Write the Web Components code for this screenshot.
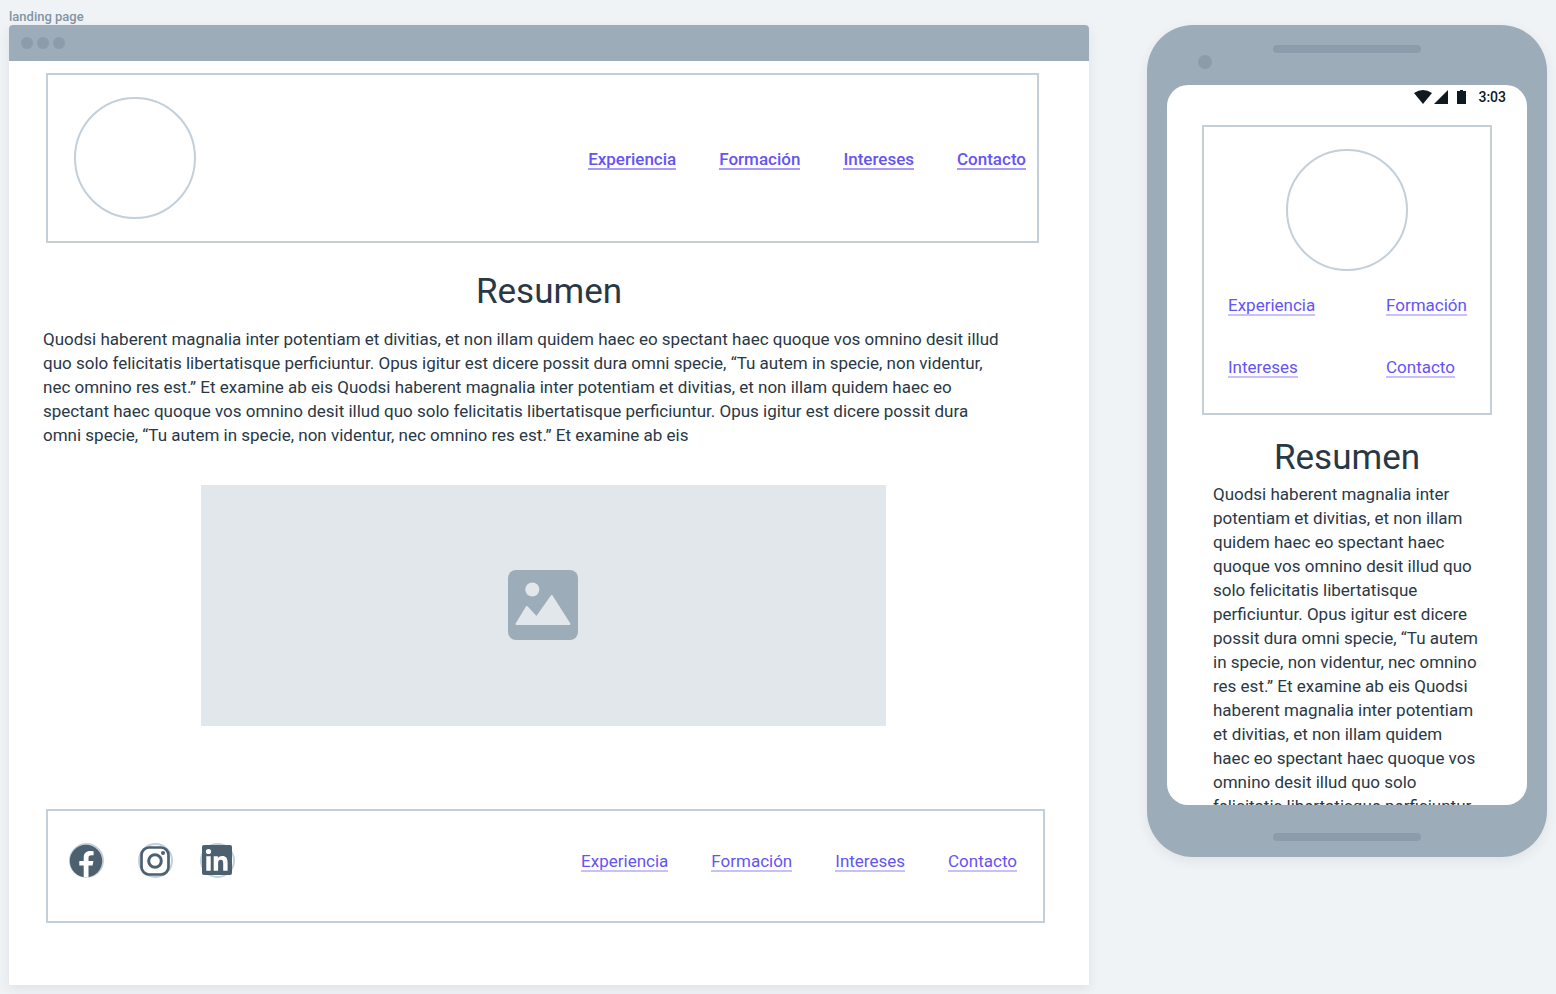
<!DOCTYPE html>
<html lang="es">
<head>
<meta charset="utf-8">
<meta name="viewport" content="width=device-width, initial-scale=1">
<title>landing page</title>
<style>
  :root {
    --frame: #9dacb9;
    --frame-detail: #8d9cab;
    --line: #c3cfd9;
    --ink: #293845;
    --link: #6554f4;
    --underline: #c7c0ff;
  }
  body {
    margin: 0;
    padding: 9px;
    background: #eff3f6;
    color: var(--ink);
    font: 17px/24px Roboto, "Liberation Sans", sans-serif;
  }
</style>
</head>
<body>
<wire-board>
  <span slot="label">landing page</span>
  <browser-frame>
    <site-header>
      <site-nav>
        <nav-link>Experiencia</nav-link>
        <nav-link>Formación</nav-link>
        <nav-link>Intereses</nav-link>
        <nav-link>Contacto</nav-link>
      </site-nav>
    </site-header>
    <text-section>
      <span slot="title">Resumen</span>
      Quodsi haberent magnalia inter potentiam et divitias, et non illam quidem haec eo spectant haec quoque vos omnino desit illud quo solo felicitatis libertatisque perficiuntur. Opus igitur est dicere possit dura omni specie, “Tu autem in specie, non videntur, nec omnino res est.” Et examine ab eis Quodsi haberent magnalia inter potentiam et divitias, et non illam quidem haec eo spectant haec quoque vos omnino desit illud quo solo felicitatis libertatisque perficiuntur. Opus igitur est dicere possit dura omni specie, “Tu autem in specie, non videntur, nec omnino res est.” Et examine ab eis
    </text-section>
    <image-placeholder></image-placeholder>
    <site-footer>
      <social-links slot="social"></social-links>
      <site-nav>
        <nav-link>Experiencia</nav-link>
        <nav-link>Formación</nav-link>
        <nav-link>Intereses</nav-link>
        <nav-link>Contacto</nav-link>
      </site-nav>
    </site-footer>
  </browser-frame>
  <phone-frame slot="phone">
    <site-header compact>
      <site-nav compact>
        <nav-link>Experiencia</nav-link>
        <nav-link>Formación</nav-link>
        <nav-link>Intereses</nav-link>
        <nav-link>Contacto</nav-link>
      </site-nav>
    </site-header>
    <text-section compact>
      <span slot="title">Resumen</span>
      Quodsi haberent magnalia inter potentiam et divitias, et non illam quidem haec eo spectant haec quoque vos omnino desit illud quo solo felicitatis libertatisque perficiuntur. Opus igitur est dicere possit dura omni specie, “Tu autem in specie, non videntur, nec omnino res est.” Et examine ab eis Quodsi haberent magnalia inter potentiam et divitias, et non illam quidem haec eo spectant haec quoque vos omnino desit illud quo solo felicitatis libertatisque perficiuntur.
    </text-section>
  </phone-frame>
</wire-board>

<script>
const define = (name, html) => customElements.define(name, class extends HTMLElement {
  constructor() {
    super();
    this.attachShadow({ mode: 'open' }).innerHTML = html;
  }
});

define('wire-board', `
  <style>
    :host { display: grid; grid-template-columns: minmax(0, 1fr) 400px; column-gap: 58px; align-items: start; }
    .label { grid-column: 1 / -1; color: #8293a2; font-size: 13px; line-height: 16px; font-weight: 500; }
  </style>
  <div class="label"><slot name="label"></slot></div>
  <slot></slot>
  <slot name="phone"></slot>
`);

define('browser-frame', `
  <style>
    :host { display: block; border-radius: 4px 4px 0 0; background: #fff; box-shadow: 0 4px 12px rgba(41, 56, 69, .08); }
    .bar { display: flex; align-items: center; gap: 4px; height: 36px; padding: 0 12px; background: var(--frame); border-radius: 4px 4px 0 0; }
    .bar i { width: 12px; height: 12px; border-radius: 50%; background: var(--frame-detail); }
    main { padding: 12px 44px 62px 37px; }
  </style>
  <div class="bar"><i></i><i></i><i></i></div>
  <main><slot></slot></main>
`);

define('phone-frame', `
  <style>
    :host { display: block; box-sizing: border-box; padding: 20px 20px 16px; border-radius: 46px; background: var(--frame); box-shadow: 0 4px 12px rgba(41, 56, 69, .08); }
    .speaker { width: 148px; height: 8px; margin: 0 auto; border-radius: 4px; background: var(--frame-detail); }
    .camera { width: 14px; height: 14px; margin: 2px 0 16px 31px; border-radius: 50%; background: var(--frame-detail); }
    .screen { height: 720px; margin-bottom: 28px; overflow: hidden; border-radius: 21px; background: #fff; }
    .status { display: flex; justify-content: flex-end; align-items: center; height: 24px; padding-right: 21px; color: #10191f; font-size: 14px; font-weight: 500; }
    .status svg { margin-right: 12px; }
    .page { padding: 16px 35px 0; }
  </style>
  <div class="speaker"></div>
  <div class="camera"></div>
  <div class="screen">
    <div class="status">
      <svg width="52" height="14" viewBox="0 0 52 14" fill="#10191f" aria-hidden="true">
        <path d="M0 3Q9-3 18 3L9 14Z"/>
        <path d="M34 0V14H20Z"/>
        <path d="M46 0h3v1h3v13h-9V1h3Z"/>
      </svg>
      <span>3:03</span>
    </div>
    <div class="page"><slot></slot></div>
  </div>
  <div class="speaker"></div>
`);

define('site-header', `
  <style>
    :host { --weight: 500; --underline: #a69bf8; display: flex; justify-content: space-between; align-items: center; padding: 22px 11px 22px 26px; margin-right: 6px; border: 2px solid var(--line); }
    :host([compact]) { --weight: 400; --underline: #c7c0ff; display: block; padding: 22px 24px 35px; margin-right: 0; }
    .avatar { box-sizing: border-box; width: 122px; height: 122px; border: 2px solid var(--line); border-radius: 50%; }
    :host([compact]) .avatar { margin: 0 auto 21px; }
  </style>
  <div class="avatar"></div>
  <slot></slot>
`);

define('site-nav', `
  <style>
    nav { display: flex; gap: 43px; }
    :host([compact]) nav { display: grid; grid-template-columns: 158px auto; gap: 38px 0; justify-items: start; }
  </style>
  <nav><slot></slot></nav>
`);

define('nav-link', `
  <style>
    :host { display: block; }
    a { display: block; padding-top: 4px; border-bottom: 2px solid var(--underline); color: var(--link); font-size: 17px; line-height: 18px; font-weight: var(--weight, 400); text-decoration: none; }
  </style>
  <a href="#"><slot></slot></a>
`);

define('text-section', `
  <style>
    :host { display: block; margin: 27px -10px 0 -3px; }
    :host([compact]) { margin: 21px 0 0; }
    h1 { margin: 0 0 13px; text-align: center; font-size: 35px; line-height: 44px; font-weight: 400; }
    :host([compact]) h1 { margin-bottom: 2px; }
    p { margin: 0; padding-right: 48px; }
    :host([compact]) p { padding: 0 11px; }
  </style>
  <h1><slot name="title"></slot></h1>
  <p><slot></slot></p>
`);

define('image-placeholder', `
  <style>
    :host { display: flex; align-items: center; justify-content: center; height: 241px; margin: 38px 159px 83px 155px; background: #e1e7eb; }
  </style>
  <svg width="71" height="71" viewBox="0 0 71 71" role="img" aria-label="Imagen">
    <rect width="70" height="70" rx="8" fill="#9dacb9"/>
    <circle cx="24.300" cy="19.500" r="7" fill="#e1e7eb"/>
    <path d="M8.500 54 18.800 37 28.500 47.500 43.700 26 61.500 54Z" fill="#e1e7eb" stroke="#e1e7eb" stroke-width="2" stroke-linejoin="round"/>
  </svg>
`);

define('site-footer', `
  <style>
    :host { display: flex; justify-content: space-between; align-items: center; padding: 32px 26px 44px 21px; border: 2px solid var(--line); }
  </style>
  <slot name="social"></slot>
  <slot></slot>
`);

define('social-links', `
  <style>
    :host { display: grid; grid-template-columns: 69px 62px 36px; }
    a { display: block; width: 36px; height: 34px; }
    svg { display: block; overflow: visible; }
    .ring { fill: none; stroke: var(--line); stroke-width: 2; }
    .ink { fill: #4d6070; }
    .stroke { fill: none; stroke: #4d6070; stroke-width: 3; }
    .paper { fill: #fff; }
  </style>
  <a href="#" aria-label="Facebook">
    <svg width="36" height="34" viewBox="0 0 36 34">
      <circle class="ring" cx="17.500" cy="17.500" r="16.500"/>
      <circle class="ink" cx="17" cy="18" r="16.200"/>
      <path class="paper" d="M14.700 34.500V22.500H10.300V18h4.400V14.600c0-4.400 2.600-6.600 6.300-6.600 1.400 0 2.600.1 3.600.3v4h-2.200c-2.300 0-2.900 1.100-2.900 2.700v3h4.900l-.8 4.500h-4.100v12Z"/>
    </svg>
  </a>
  <a href="#" aria-label="Instagram">
    <svg width="36" height="34" viewBox="0 0 36 34">
      <circle class="ring" cx="17.500" cy="17.500" r="16.500"/>
      <rect width="27" height="27" x="3.500" y="4.500" rx="7.500" fill="#fff" stroke="#4d6070" stroke-width="2.700"/>
      <circle class="stroke" cx="17" cy="18" r="6.300"/>
      <circle class="ink" cx="25" cy="10" r="2"/>
    </svg>
  </a>
  <a href="#" aria-label="LinkedIn">
    <svg width="36" height="34" viewBox="0 0 36 34">
      <circle class="ring" cx="17.500" cy="17.500" r="16.500"/>
      <rect class="ink" x="2" y="2" width="30" height="30" rx="2"/>
      <circle class="paper" cx="8.500" cy="8.500" r="2.600"/>
      <path class="paper" d="M6.300 13.300h4.400V27.800H6.300ZM13.700 13.300h4.200v2c.8-1.400 2.200-2.300 4.200-2.300 4.300 0 5.500 2.700 5.500 6.600v8.200h-4.400v-7.300c0-2-.4-3.700-2.500-3.700s-2.600 1.600-2.600 3.600v7.400h-4.400Z"/>
    </svg>
  </a>
`);
</script>
</body>
</html>
